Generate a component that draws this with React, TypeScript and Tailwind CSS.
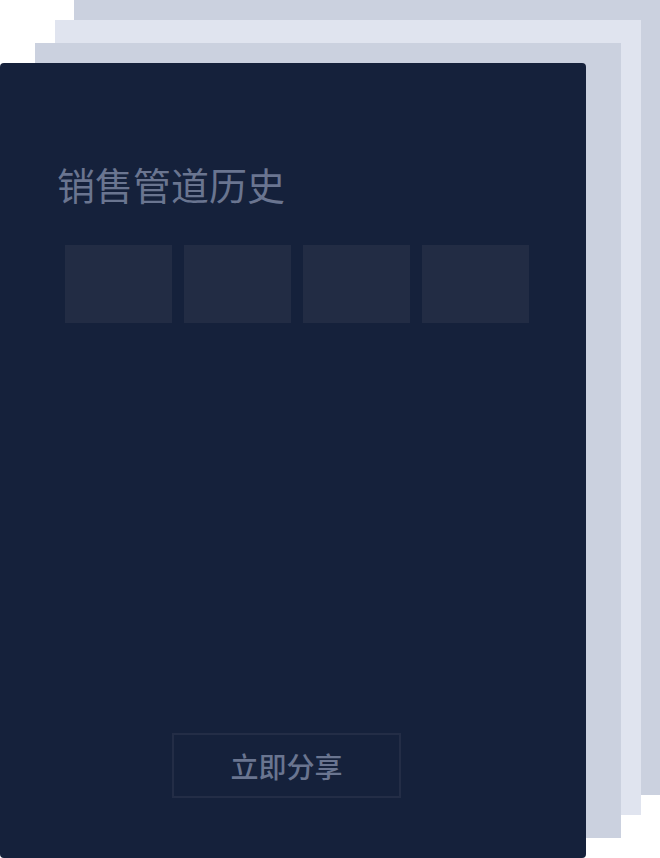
import React from "react";

export default function App() {
  const font = { fontFamily: '"Noto Sans CJK SC", "Noto Sans", sans-serif' };
  return (
    <div className="relative w-[660px] h-[858px] bg-white overflow-hidden" style={font}>
      <div className="absolute left-[74px] top-0 w-[586px] h-[795px] bg-[#cbd1df]" />
      <div className="absolute left-[55px] top-[20px] w-[586px] h-[795px] bg-[#e0e4ef]" />
      <div className="absolute left-[35px] top-[43px] w-[586px] h-[795px] bg-[#cbd1df]" />
      <div className="absolute left-0 top-[63px] w-[586px] h-[795px] bg-[#15213b] rounded-[4px] flex flex-col">
        <h1 className="mt-[102px] ml-[57px] text-[38px] leading-none text-[#6a7590] font-normal">
          销售管道历史
        </h1>
        <div className="mt-[42px] ml-[65px] flex gap-[12px]">
          <div className="w-[107px] h-[78px] bg-[#222c44]" />
          <div className="w-[107px] h-[78px] bg-[#222c44]" />
          <div className="w-[107px] h-[78px] bg-[#222c44]" />
          <div className="w-[107px] h-[78px] bg-[#222c44]" />
        </div>
        <div className="mt-auto mb-[60px] ml-[172px] w-[229px] h-[65px] border-2 border-[#232d46] flex items-center justify-center">
          <span className="text-[28px] font-medium text-[#6a7590] leading-none">立即分享</span>
        </div>
      </div>
    </div>
  );
}
